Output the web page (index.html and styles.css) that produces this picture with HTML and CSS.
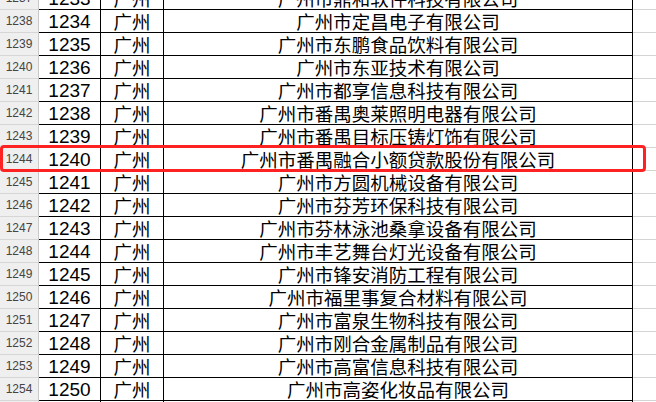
FILE: index.html
```html
<!DOCTYPE html>
<html lang="zh-CN">
<head>
<meta charset="utf-8">
<link rel="stylesheet" href="styles.css">
</head>
<body>
<div class="sheet">
  <div class="rows">
    <div class="row"><div class="hdr">1237</div><div class="c num">1233</div><div class="c city">广州</div><div class="c name">广州市鼎和软件科技有限公司</div><div class="rest"></div></div>
    <div class="row"><div class="hdr">1238</div><div class="c num">1234</div><div class="c city">广州</div><div class="c name">广州市定昌电子有限公司</div><div class="rest"></div></div>
    <div class="row"><div class="hdr">1239</div><div class="c num">1235</div><div class="c city">广州</div><div class="c name">广州市东鹏食品饮料有限公司</div><div class="rest"></div></div>
    <div class="row"><div class="hdr">1240</div><div class="c num">1236</div><div class="c city">广州</div><div class="c name">广州市东亚技术有限公司</div><div class="rest"></div></div>
    <div class="row"><div class="hdr">1241</div><div class="c num">1237</div><div class="c city">广州</div><div class="c name">广州市都享信息科技有限公司</div><div class="rest"></div></div>
    <div class="row"><div class="hdr">1242</div><div class="c num">1238</div><div class="c city">广州</div><div class="c name">广州市番禺奥莱照明电器有限公司</div><div class="rest"></div></div>
    <div class="row"><div class="hdr">1243</div><div class="c num">1239</div><div class="c city">广州</div><div class="c name">广州市番禺目标压铸灯饰有限公司</div><div class="rest"></div></div>
    <div class="row"><div class="hdr">1244</div><div class="c num">1240</div><div class="c city">广州</div><div class="c name">广州市番禺融合小额贷款股份有限公司</div><div class="rest"></div></div>
    <div class="row"><div class="hdr">1245</div><div class="c num">1241</div><div class="c city">广州</div><div class="c name">广州市方圆机械设备有限公司</div><div class="rest"></div></div>
    <div class="row"><div class="hdr">1246</div><div class="c num">1242</div><div class="c city">广州</div><div class="c name">广州市芬芳环保科技有限公司</div><div class="rest"></div></div>
    <div class="row"><div class="hdr">1247</div><div class="c num">1243</div><div class="c city">广州</div><div class="c name">广州市芬林泳池桑拿设备有限公司</div><div class="rest"></div></div>
    <div class="row"><div class="hdr">1248</div><div class="c num">1244</div><div class="c city">广州</div><div class="c name">广州市丰艺舞台灯光设备有限公司</div><div class="rest"></div></div>
    <div class="row"><div class="hdr">1249</div><div class="c num">1245</div><div class="c city">广州</div><div class="c name">广州市锋安消防工程有限公司</div><div class="rest"></div></div>
    <div class="row"><div class="hdr">1250</div><div class="c num">1246</div><div class="c city">广州</div><div class="c name">广州市福里事复合材料有限公司</div><div class="rest"></div></div>
    <div class="row"><div class="hdr">1251</div><div class="c num">1247</div><div class="c city">广州</div><div class="c name">广州市富泉生物科技有限公司</div><div class="rest"></div></div>
    <div class="row"><div class="hdr">1252</div><div class="c num">1248</div><div class="c city">广州</div><div class="c name">广州市刚合金属制品有限公司</div><div class="rest"></div></div>
    <div class="row"><div class="hdr">1253</div><div class="c num">1249</div><div class="c city">广州</div><div class="c name">广州市高富信息科技有限公司</div><div class="rest"></div></div>
    <div class="row"><div class="hdr">1254</div><div class="c num">1250</div><div class="c city">广州</div><div class="c name">广州市高姿化妆品有限公司</div><div class="rest"></div></div>
    <div class="row"><div class="hdr">1255</div><div class="c num">1251</div><div class="c city">广州</div><div class="c name">广州市高新技术有限公司</div><div class="rest"></div></div>
  </div>
  <div class="highlight"></div>
</div>
</body>
</html>
```

FILE: styles.css
```css
* { box-sizing: border-box; }
html, body {
  margin: 0;
  padding: 0;
  background: #ffffff;
}
.sheet {
  position: relative;
  width: 656px;
  height: 402px;
  overflow: hidden;
  background: #ffffff;
}
.rows {
  display: flex;
  flex-direction: column;
  margin-top: -13px;
}
.row {
  display: grid;
  grid-template-columns: 39px 62px 63px 469px 1fr;
  height: 23px;
}
.hdr {
  background: #efefef;
  border-right: 1px solid #c9c9c9;
  border-bottom: 1px solid #d6d6d6;
  color: #444444;
  font-family: "Liberation Sans", Arial, sans-serif;
  font-size: 12px;
  line-height: 22px;
  text-align: center;
}
.c {
  border-right: 1px solid #000000;
  border-bottom: 1px solid #000000;
  text-align: center;
  white-space: nowrap;
  overflow: hidden;
  color: #000000;
  line-height: 22px;
}
.num {
  font-family: "Liberation Sans", Arial, sans-serif;
  font-size: 19px;
  padding-top: 1px;
}
.city, .name {
  font-family: "Noto Sans CJK SC", "Noto Sans", sans-serif;
  font-size: 18.5px;
}
.rest {
  border-bottom: 1px solid #d4d4d4;
}
.highlight {
  position: absolute;
  left: 0;
  top: 145px;
  width: 646px;
  height: 27px;
  border: 3px solid #ff2222;
  border-radius: 4px;
}
```
